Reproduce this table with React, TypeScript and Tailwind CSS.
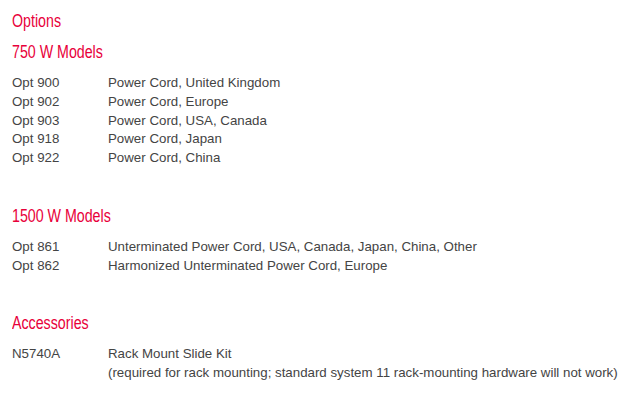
export default function App() {
  const heading = "origin-left scale-x-[0.79] text-[18px] leading-[20px] text-[#e8003a] whitespace-nowrap";
  const row = "flex text-[13.3px] leading-[18.75px] text-[#444444]";

  const models750 = [
    ["Opt 900", "Power Cord, United Kingdom"],
    ["Opt 902", "Power Cord, Europe"],
    ["Opt 903", "Power Cord, USA, Canada"],
    ["Opt 918", "Power Cord, Japan"],
    ["Opt 922", "Power Cord, China"],
  ];
  const models1500 = [
    ["Opt 861", "Unterminated Power Cord, USA, Canada, Japan, China, Other"],
    ["Opt 862", "Harmonized Unterminated Power Cord, Europe"],
  ];

  return (
    <div className="w-[637px] h-[401px] bg-white px-3 pt-[11px] [font-family:'Liberation_Sans',Arial,sans-serif]">
      <div className="flex"><h1 className={heading}>Options</h1></div>
      <div className="flex mt-[11px]"><h2 className={heading}>750 W Models</h2></div>
      <div className="mt-[12px]">
        {models750.map(([code, desc]) => (
          <div key={code} className={row}>
            <span className="w-[96px] shrink-0">{code}</span>
            <span>{desc}</span>
          </div>
        ))}
      </div>
      <div className="flex mt-[38px]"><h2 className={heading}>1500 W Models</h2></div>
      <div className="mt-[12px]">
        {models1500.map(([code, desc]) => (
          <div key={code} className={row}>
            <span className="w-[96px] shrink-0">{code}</span>
            <span>{desc}</span>
          </div>
        ))}
      </div>
      <div className="flex mt-[38px]"><h2 className={heading}>Accessories</h2></div>
      <div className={`${row} mt-[12px]`}>
        <span className="w-[96px] shrink-0">N5740A</span>
        <span>
          Rack Mount Slide Kit
          <br />
          (required for rack mounting; standard system 11 rack-mounting hardware will not work)
        </span>
      </div>
    </div>
  );
}
